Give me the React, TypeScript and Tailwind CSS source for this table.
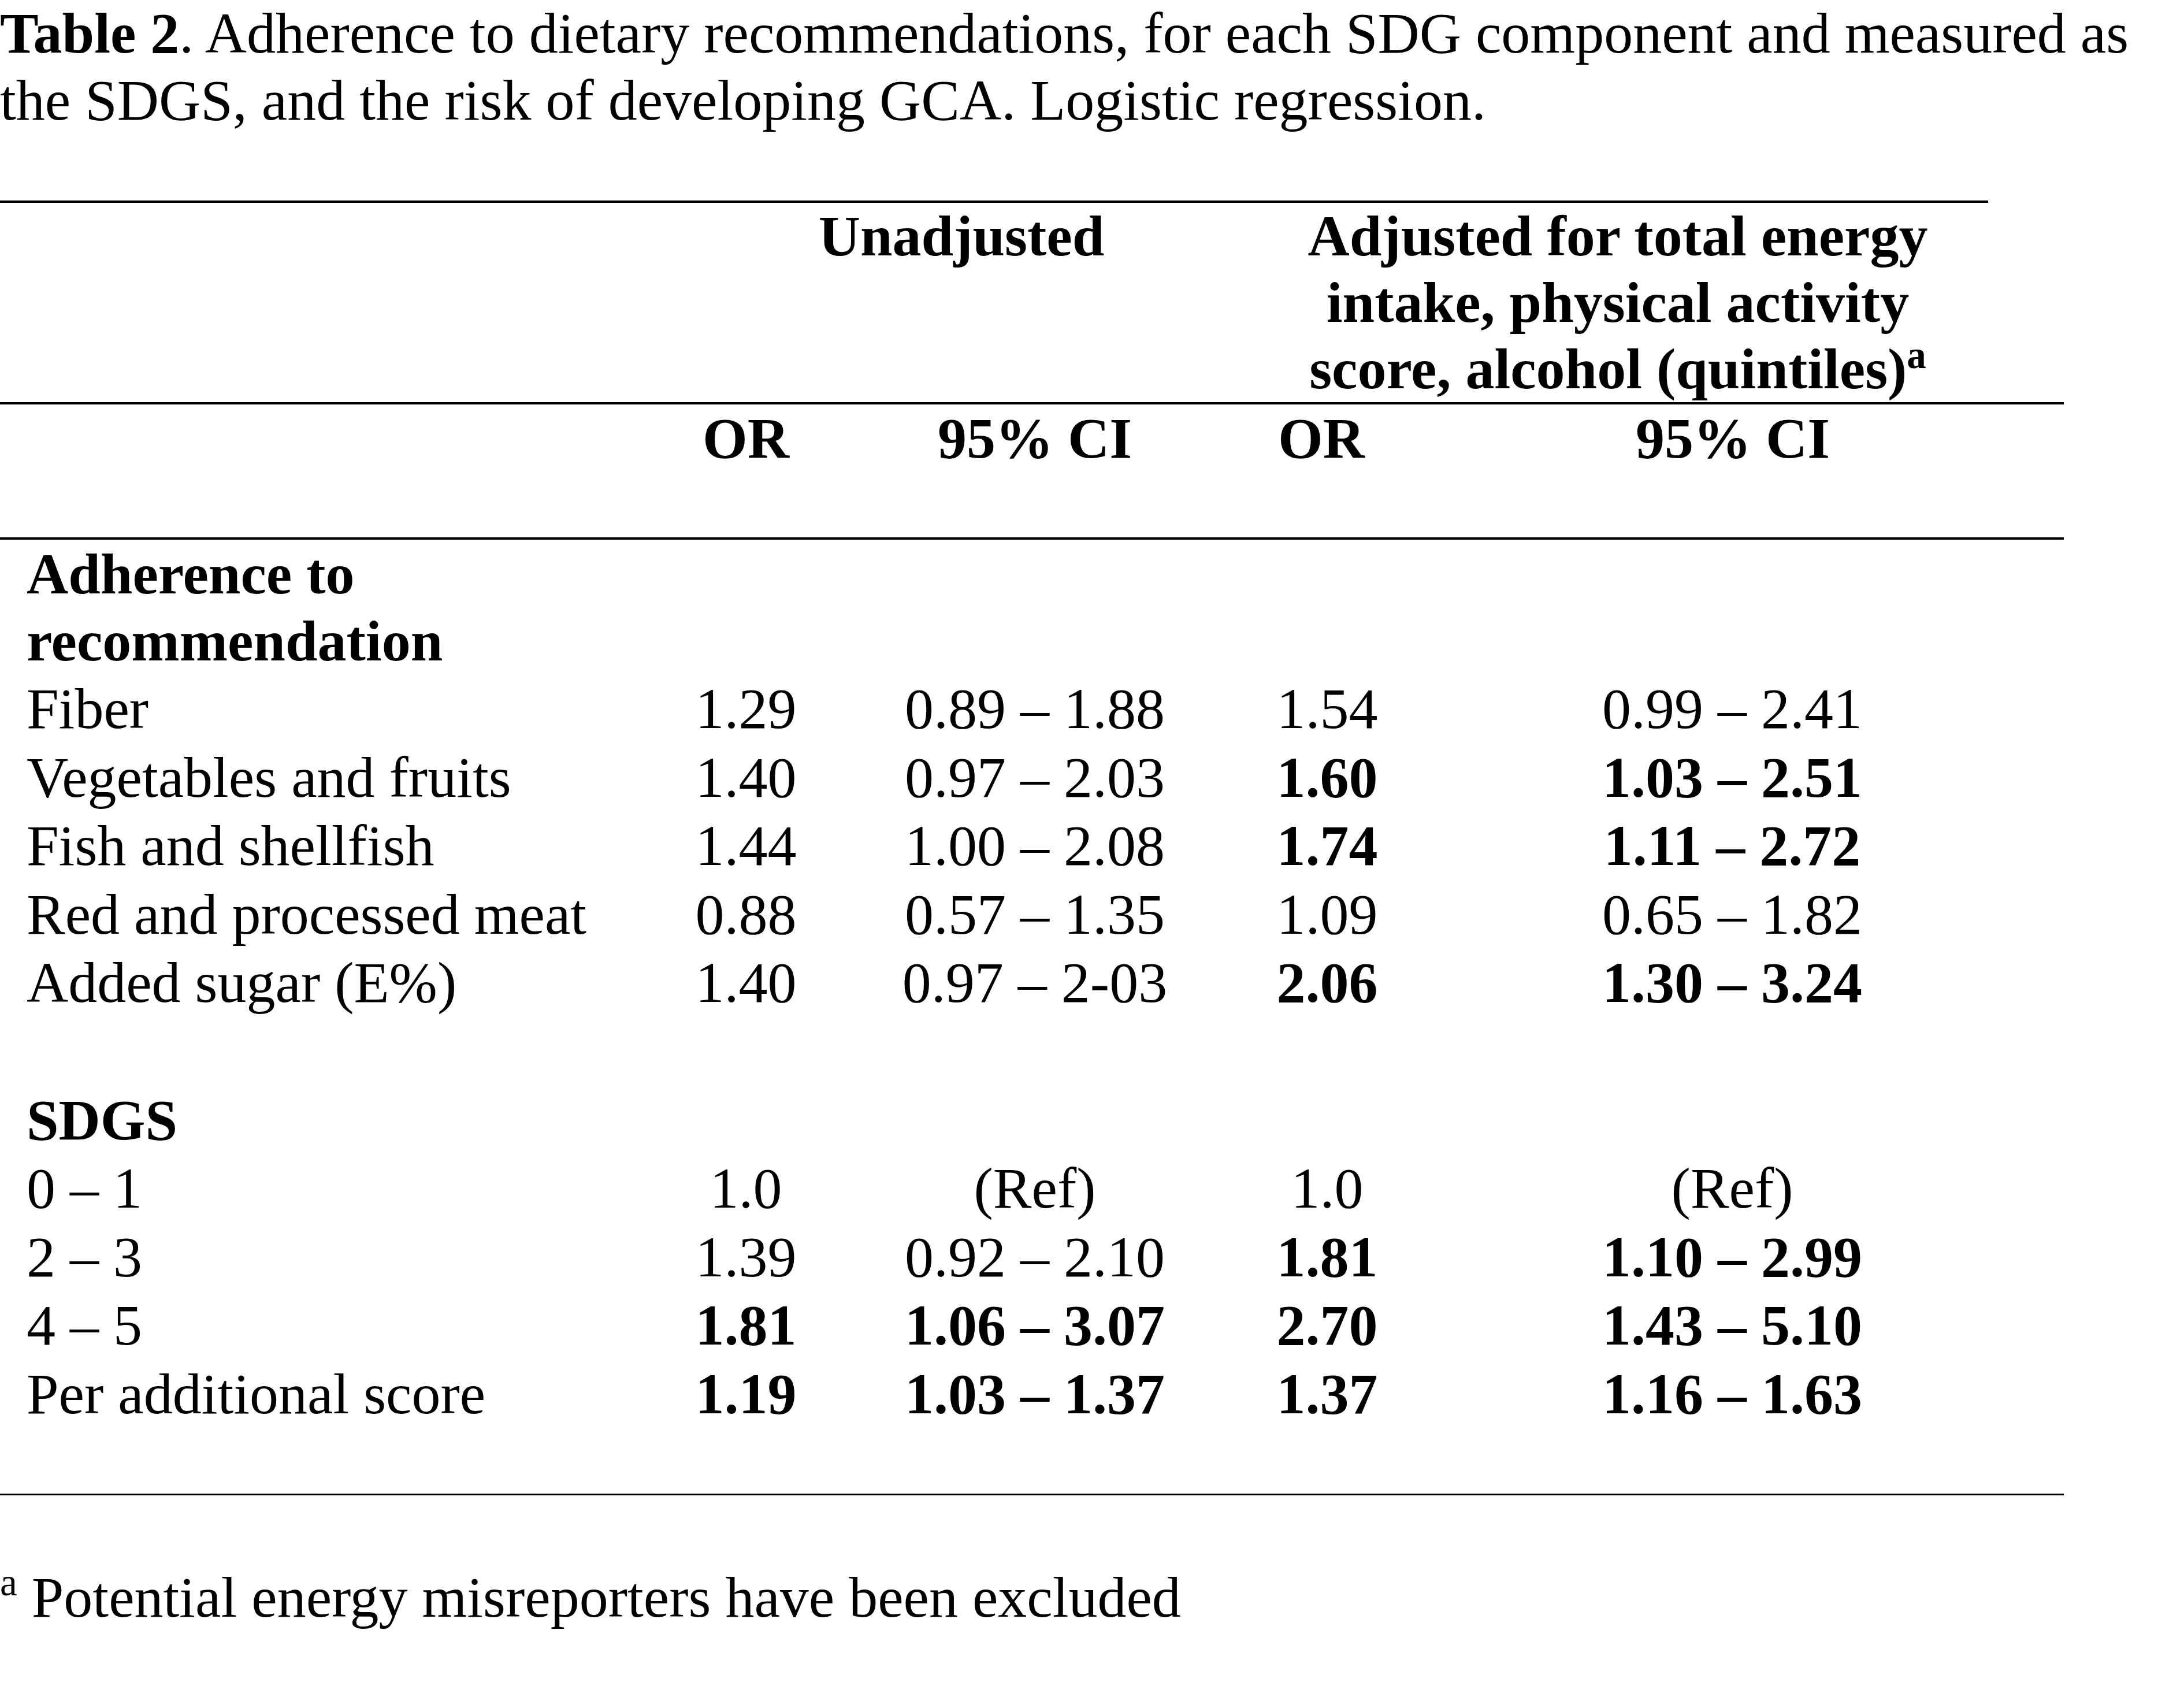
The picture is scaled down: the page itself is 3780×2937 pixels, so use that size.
type Cell = { v: string; b?: boolean };

type Row = {
  label: string;
  cells: [Cell, Cell, Cell, Cell];
};

const COL_W = ["w-[262px]", "w-[738px]", "w-[274px]", "w-[1128px]"];

const adherence: Row[] = [
  { label: "Fiber", cells: [{ v: "1.29" }, { v: "0.89 – 1.88" }, { v: "1.54" }, { v: "0.99 – 2.41" }] },
  { label: "Vegetables and fruits", cells: [{ v: "1.40" }, { v: "0.97 – 2.03" }, { v: "1.60", b: true }, { v: "1.03 – 2.51", b: true }] },
  { label: "Fish and shellfish", cells: [{ v: "1.44" }, { v: "1.00 – 2.08" }, { v: "1.74", b: true }, { v: "1.11 – 2.72", b: true }] },
  { label: "Red and processed meat", cells: [{ v: "0.88" }, { v: "0.57 – 1.35" }, { v: "1.09" }, { v: "0.65 – 1.82" }] },
  { label: "Added sugar (E%)", cells: [{ v: "1.40" }, { v: "0.97 – 2-03" }, { v: "2.06", b: true }, { v: "1.30 – 3.24", b: true }] },
];

const sdgs: Row[] = [
  { label: "0 – 1", cells: [{ v: "1.0" }, { v: "(Ref)" }, { v: "1.0" }, { v: "(Ref)" }] },
  { label: "2 – 3", cells: [{ v: "1.39" }, { v: "0.92 – 2.10" }, { v: "1.81", b: true }, { v: "1.10 – 2.99", b: true }] },
  { label: "4 – 5", cells: [{ v: "1.81", b: true }, { v: "1.06 – 3.07", b: true }, { v: "2.70", b: true }, { v: "1.43 – 5.10", b: true }] },
  { label: "Per additional score", cells: [{ v: "1.19", b: true }, { v: "1.03 – 1.37", b: true }, { v: "1.37", b: true }, { v: "1.16 – 1.63", b: true }] },
];

function DataRow({ row }: { row: Row }) {
  return (
    <div className="flex h-[118.6px] leading-[118.6px]">
      <div className="w-[1160px] pl-[46px] whitespace-nowrap">{row.label}</div>
      {row.cells.map((c, i) => (
        <div key={i} className={`${COL_W[i]} text-center whitespace-nowrap ${c.b ? "font-bold" : ""}`}>
          {c.v}
        </div>
      ))}
    </div>
  );
}

function SectionLabel({ children }: { children: React.ReactNode }) {
  return (
    <div className="flex h-[118.6px] leading-[118.6px] font-bold">
      <div className="w-[1160px] pl-[46px] whitespace-nowrap">{children}</div>
    </div>
  );
}

export default function App() {
  return (
    <div className="min-h-screen w-[3780px] bg-white text-black font-['Liberation_Serif','Times_New_Roman',serif] text-[100px]">
      {/* Caption */}
      <p className="leading-[116px] whitespace-nowrap">
        <span className="font-bold">Table 2</span>. Adherence to dietary recommendations, for each SDG component and measured as
        <br />
        the SDGS, and the risk of developing GCA. Logistic regression.
      </p>

      {/* Table */}
      <div className="mt-[115px] w-[3572px]">
        <div className="h-[4px] w-[3441px] bg-black" />
        <div className="flex h-[345px] font-bold leading-[115px]">
          <div className="w-[1160px]" />
          <div className="w-[1008px] text-center">Unadjusted</div>
          <div className="w-[1264px] text-center whitespace-nowrap">
            Adjusted for total energy
            <br />
            intake, physical activity
            <br />
            score, alcohol (quintiles)
            <sup className="text-[67px] top-[-35px]">a</sup>
          </div>
        </div>
        <div className="h-[4px] bg-black" />

        <div className="flex h-[230px] pt-[1px] font-bold leading-[116px]">
          <div className="w-[1160px]" />
          <div className={`${COL_W[0]} text-center`}>OR</div>
          <div className={`${COL_W[1]} text-center`}>95% CI</div>
          <div className="w-[254px] text-center">OR</div>
          <div className="w-[1146px] pl-[24px] text-center">95% CI</div>
        </div>
        <div className="h-[4px] bg-black" />

        <div className="pt-[2px] font-bold leading-[116px]">
          <div className="w-[1160px] pl-[46px]">
            Adherence to
            <br />
            recommendation
          </div>
        </div>
        {adherence.map((r) => (
          <DataRow key={r.label} row={r} />
        ))}
        <div className="h-[118.6px]" />
        <SectionLabel>SDGS</SectionLabel>
        {sdgs.map((r) => (
          <DataRow key={r.label} row={r} />
        ))}
        <div className="h-[112px]" />
        <div className="h-[3px] bg-black" />
      </div>

      {/* Footnote */}
      <p className="mt-[118px] leading-[117px] whitespace-nowrap">
        <sup className="text-[67px] top-[-37px]">a</sup> Potential energy misreporters have been excluded
      </p>
    </div>
  );
}
